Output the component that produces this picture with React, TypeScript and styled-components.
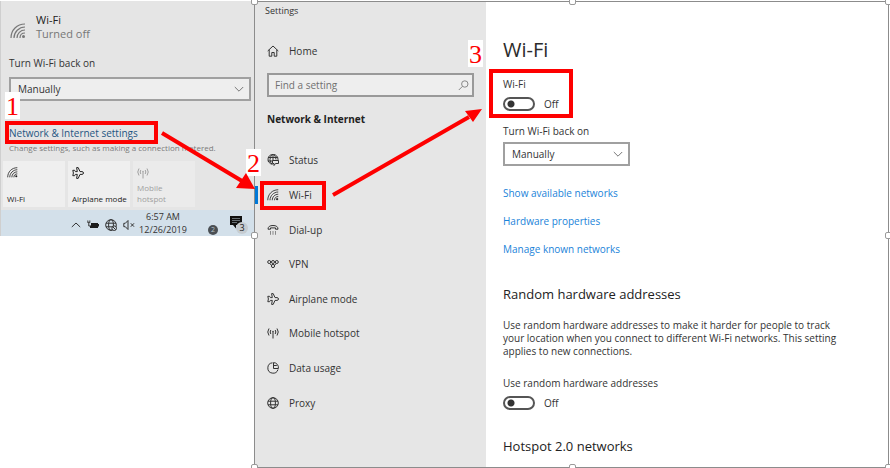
import React from "react";
import styled, { createGlobalStyle, css } from "styled-components";

const GlobalStyle = createGlobalStyle`
  * { box-sizing: border-box; }
  body {
    margin: 0;
    background: #fff;
    color: #333;
    font-family: "Open Sans", "Noto Sans", sans-serif;
    font-size: 10px;
    line-height: 14px;
  }
  button, input, select { font: inherit; color: inherit; }
  h1, h2, p { margin: 0; }
`;

/* ---------- shared parts ---------- */

const Page = styled.main`
  position: relative;
  display: flex;
  align-items: flex-start;
  min-height: 100vh;
  padding: 1px 1px 0 0;
  overflow: hidden;
`;

const SelectBox = styled.div<{ $muted?: boolean }>`
  position: relative;
  display: flex;
  align-items: center;
  height: 24px;
  svg {
    position: absolute;
    right: 7px;
    color: #777;
    pointer-events: none;
  }
  select {
    width: 100%;
    height: 100%;
    padding: 0 7px;
    appearance: none;
    border: 2px solid #a0a0a0;
    border-radius: 0;
    background: ${(p) => (p.$muted ? "#eeeeee" : "#fff")};
  }
`;

const Marked = styled.div<{ $top: number; $right: number; $bottom: number; $left: number }>`
  position: relative;
  width: fit-content;
  &::after {
    content: "";
    position: absolute;
    top: -${(p) => p.$top}px;
    right: -${(p) => p.$right}px;
    bottom: -${(p) => p.$bottom}px;
    left: -${(p) => p.$left}px;
    border: 4px solid #fe0000;
    pointer-events: none;
  }
`;

const StepNumber = styled.span<{ $x: number; $y: number }>`
  position: absolute;
  left: ${(p) => p.$x}px;
  top: ${(p) => p.$y}px;
  width: 15px;
  height: 27px;
  background: #fff;
  color: #fe0000;
  font-family: "Liberation Serif", serif;
  font-size: 26px;
  line-height: 30px;
  text-align: center;
`;

const Arrows = styled.svg`
  position: absolute;
  left: 0;
  top: 0;
  pointer-events: none;
`;

/* ---------- network flyout ---------- */

const Flyout = styled.section`
  flex: 0 0 254px;
  border-left: 1px solid #cfcfcf;
  background: #e5e5e5;
`;

const FlyoutBody = styled.div`
  padding: 12px 3px 3px 8px;
`;

const Connection = styled.div`
  display: flex;
  gap: 10px;
  padding-left: 1px;
  color: #777;
  font-size: 11px;
  svg { margin-top: 10px; }
  strong {
    display: block;
    color: #222;
    font-weight: 400;
  }
`;

const FlyoutLabel = styled.label`
  display: block;
  margin: 15px 0 7px;
`;

const FlyoutMark = styled.div`
  margin-top: 25px;
`;

const FlyoutLink = styled.a`
  display: block;
  color: #1f5582;
  text-decoration: none;
`;

const Caption = styled.p`
  margin-top: 2px;
  color: #7b7b7b;
  font-size: 8px;
  line-height: 12px;
  white-space: nowrap;
`;

const Tiles = styled.div`
  display: grid;
  grid-template-columns: repeat(3, 62px);
  gap: 3px;
  margin: 7px 0 0 -6px;
`;

const Tile = styled.button<{ $off?: boolean }>`
  display: flex;
  flex-direction: column;
  align-items: flex-start;
  justify-content: space-between;
  height: 46px;
  padding: 6px 0 3px 4px;
  border: 0;
  background: ${(p) => (p.$off ? "#ebebeb" : "#efefef")};
  color: ${(p) => (p.$off ? "#a0a0a0" : "#222")};
  font-size: 8px;
  line-height: 11px;
  text-align: left;
  white-space: nowrap;
`;

const Taskbar = styled.div`
  display: flex;
  align-items: center;
  height: 26px;
  padding: 0 6px 0 70px;
  background: #d3e0ea;
  color: #333;
`;

const Tray = styled.div`
  display: flex;
  align-items: center;
  gap: 6px;
  padding-top: 3px;
`;

const Clock = styled.time`
  width: 56px;
  font-size: 9px;
  line-height: 13px;
  text-align: center;
`;

const TrayEnd = styled.div`
  display: flex;
  align-items: center;
  gap: 12px;
  margin-left: auto;
`;

const Dot = styled.span`
  display: grid;
  place-items: center;
  width: 10px;
  height: 10px;
  margin-top: 13px;
  border-radius: 50%;
  background: #4a4f54;
  color: #b8c4cc;
  font-size: 7px;
  line-height: 10px;
`;

const Notice = styled.button`
  position: relative;
  display: flex;
  width: 18px;
  height: 22px;
  padding: 4px 0 0 0;
  border: 0;
  background: none;
`;

const Count = styled.span`
  position: absolute;
  right: 0;
  bottom: 0;
  width: 12px;
  height: 12px;
  border-radius: 50%;
  background: #c6ccd1;
  color: #222;
  font-size: 9px;
  line-height: 12px;
  text-align: center;
`;

/* ---------- settings window ---------- */

const Settings = styled.section`
  position: relative;
  display: flex;
  flex: 1;
  min-height: calc(100vh - 1px);
  border: 1px solid #8c8c8c;
`;

const Handle = styled.i<{ $h: "left" | "center" | "right"; $v: "top" | "middle" | "bottom" }>`
  position: absolute;
  width: 7px;
  height: 7px;
  border: 1px solid #9a9a9a;
  border-radius: 2px;
  background: #fff;
  ${(p) => p.$h === "left" && css`left: -4px;`}
  ${(p) => p.$h === "center" && css`left: calc(50% - 3px);`}
  ${(p) => p.$h === "right" && css`right: -4px;`}
  ${(p) => p.$v === "top" && css`top: -4px;`}
  ${(p) => p.$v === "middle" && css`top: calc(50% - 3px);`}
  ${(p) => p.$v === "bottom" && css`bottom: -4px;`}
`;

const Sidebar = styled.nav`
  flex: 0 0 231px;
  padding: 2px 12px 0 12px;
  background: #e6e6e6;
`;

const WindowTitle = styled.p`
  margin-left: -2px;
  font-size: 9px;
  line-height: 14px;
`;

const NavLink = styled.a`
  display: flex;
  align-items: center;
  gap: 10px;
  color: #333;
  text-decoration: none;
  svg { flex: none; }
`;

const Home = styled(NavLink)`
  margin-top: 26px;
`;

const Search = styled.div`
  position: relative;
  display: flex;
  align-items: center;
  height: 24px;
  margin-top: 15px;
  input {
    width: 100%;
    height: 100%;
    padding: 0 6px;
    border: 2px solid #999;
    border-radius: 0;
    background: #eeeeee;
  }
  input::placeholder { color: #707070; opacity: 1; }
  svg { position: absolute; right: 5px; }
`;

const Group = styled.h2`
  margin: 15px 0 17px;
  color: #222;
  font-size: 10px;
  font-weight: 700;
  line-height: 14px;
`;

const NavList = styled.ul`
  display: grid;
  grid-auto-rows: 1fr;
  align-items: center;
  min-height: 277px;
  margin: 0;
  padding: 0;
  list-style: none;
`;

const NavItem = styled.li<{ $current?: boolean }>`
  padding: 2px 0;
  ${(p) =>
    p.$current &&
    css`
      margin-left: -12px;
      padding-left: 9px;
      border-left: 3px solid #0078d7;
    `}
`;

const Content = styled.div`
  flex: 1;
  padding: 34px 17px 0;
`;

const Title = styled.h1`
  color: #2b2b2b;
  font-size: 20px;
  font-weight: 400;
  line-height: 28px;
`;

const Field = styled.div<{ $gap: number }>`
  margin-top: ${(p) => p.$gap}px;
  label { display: block; }
`;

const SwitchLine = styled.div`
  display: flex;
  align-items: center;
  gap: 9px;
  margin-top: 6px;
  input {
    width: 32px;
    height: 14px;
    margin: 0;
    appearance: none;
    border: 2px solid #555;
    border-radius: 8px;
    background: radial-gradient(circle at 6px 5px, #333 3px, transparent 4px);
  }
`;

const ContentSelect = styled(SelectBox)`
  width: 127px;
  margin-top: 4px;
`;

const Links = styled.div`
  display: grid;
  gap: 14px;
  justify-items: start;
  margin-top: 20px;
  a { color: #1a83d9; text-decoration: none; }
`;

const Heading = styled.h2<{ $gap: number }>`
  margin-top: ${(p) => p.$gap}px;
  color: #222;
  font-size: 13px;
  font-weight: 400;
  line-height: 20px;
`;

const Text = styled.p`
  max-width: 350px;
  margin-top: 15px;
  line-height: 13px;
`;

/* ---------- icons ---------- */

const line = { fill: "none", stroke: "currentColor", strokeWidth: 1 } as const;

const WifiIcon = ({ size = 12 }: { size?: number }) => (
  <svg width={size} height={size} viewBox="0 0 16 16" {...line} strokeWidth={1.2}>
    <path d="M1 15C1 7 7 1 15 1M4 15C4 9 9 4 15 4M7 15c0-4.500 3.500-8 8-8M10 15c0-3 2-5 5-5" />
    <circle cx="13.500" cy="13.500" r="1.500" fill="currentColor" stroke="none" />
  </svg>
);
const PlaneIcon = () => (
  <svg width="12" height="12" viewBox="0 0 12 12" {...line}>
    <path d="M4.600.6h1.600l1.800 4h2q1.500.2 1.500 1.400T10 7.400H8l-1.800 4H4.600l.7-4H3.400L2.600 8.700H.8L1.400 6 .8 3.300h1.800l.8 1.300h1.900z" />
  </svg>
);
const HotspotIcon = () => (
  <svg width="12" height="12" viewBox="0 0 12 12" {...line}>
    <path d="M2 1.500Q-.5 5 2 8.500M3.800 3q-1.300 2 0 4M10 1.500q2.500 3.500 0 7M8.200 3q1.300 2 0 4M6 5v6.500" />
    <circle cx="6" cy="4.500" r=".8" fill="currentColor" stroke="none" />
  </svg>
);
const ChevronIcon = ({ up }: { up?: boolean }) => (
  <svg width="10" height="10" viewBox="0 0 10 10" {...line}>
    <path d={up ? "M.8 7 5 3l4.200 4" : "M.8 3 5 7.200 9.200 3"} />
  </svg>
);
const BatteryIcon = () => (
  <svg width="12" height="10" viewBox="0 0 12 10">
    <path d="M4 3h7v1h1v2.500h-1V8H3V5.500h1z" fill="#1c1c1c" />
    <path d="M.8.500v1.300M2.800.500v1.300M.3 2.300h3M1.800 2.500v3.500h1.500" fill="none" stroke="#333" />
  </svg>
);
const GlobeIcon = ({ tray }: { tray?: boolean }) => (
  <svg width="12" height="12" viewBox="0 0 12 12" {...line}>
    <circle cx="6" cy="6" r="5.300" />
    <ellipse cx="6" cy="6" rx="2.400" ry="5.300" />
    <path d="M1 4.200h10M1 7.800h10" />
    {tray && (
      <>
        <circle cx="9.200" cy="9.200" r="2.300" fill="#d3e0ea" />
        <path d="m7.600 7.600 3.200 3.200" />
      </>
    )}
  </svg>
);
const MuteIcon = () => (
  <svg width="12" height="12" viewBox="0 0 12 12" {...line}>
    <path d="M.8 4.300h1.500L5 1.500v9L2.300 7.700H.8zM7.800 4.300l3.200 3.400M11 4.300 7.800 7.700" />
  </svg>
);
const MessageIcon = () => (
  <svg width="12" height="13" viewBox="0 0 12 13">
    <path d="M0 0h12v9H6v3.500L3 9H0z" fill="#111" />
    <path d="M2 2.500h8M2 4.500h8M2 6.500h5" stroke="#7c868d" strokeWidth=".8" />
  </svg>
);
const HomeIcon = () => (
  <svg width="12" height="12" viewBox="0 0 12 12" {...line}>
    <path d="M.7 6 6 1l5.300 5M2.200 4.800v6.400h2.600V7.500h2.400v3.700h2.600V4.800" />
  </svg>
);
const SearchIcon = () => (
  <svg width="11" height="11" viewBox="0 0 11 11" {...line} stroke="#888">
    <circle cx="6.800" cy="4" r="3.200" />
    <path d="M4.500 6.300.8 10" />
  </svg>
);
const StatusIcon = () => (
  <svg width="12" height="12" viewBox="0 0 12 12" {...line}>
    <path d="M5.500 10.300A5 5 0 1 1 11 5.500V7M6 .5v6M5.500.5Q3 2.500 3 5.500t2 4.700M6.500.5Q9 2.500 9 5.500M1.200 3.500h9.600M.8 7H6" />
    <path d="M5.500 6.500h6v3h-3L7 11.500v-2H5.500z" fill="#e6e6e6" />
  </svg>
);
const DialIcon = () => (
  <svg width="12" height="12" viewBox="0 0 12 12" {...line}>
    <path d="M1 5.200Q1 1.500 6 1.500t5 3.700H8.500V3.900h-5v1.300z" />
    <path d="M3.500 7v3.800M6 7v3.800M8.500 7v3.800" stroke="#888" />
  </svg>
);
const VpnIcon = () => (
  <svg width="12" height="12" viewBox="0 0 12 12" {...line}>
    <circle cx="2.200" cy="4" r="1.500" />
    <circle cx="6" cy="4" r="1.500" />
    <circle cx="9.800" cy="4" r="1.500" />
    <circle cx="6" cy="8" r="1.600" />
    <path d="m3 5.500 1.500 2M9 5.500l-1.500 2" />
  </svg>
);
const DataIcon = () => (
  <svg width="12" height="12" viewBox="0 0 12 12" {...line}>
    <path d="M5.500.8A5.200 5.200 0 1 0 11 7.500M6.500.6a5 5 0 0 1 4.900 5.900H6.500zM6.500 3.500h3.300" />
  </svg>
);

/* ---------- page ---------- */

const NAV = [
  { label: "Status", icon: <StatusIcon /> },
  { label: "Wi-Fi", icon: <WifiIcon />, current: true },
  { label: "Dial-up", icon: <DialIcon /> },
  { label: "VPN", icon: <VpnIcon /> },
  { label: "Airplane mode", icon: <PlaneIcon /> },
  { label: "Mobile hotspot", icon: <HotspotIcon /> },
  { label: "Data usage", icon: <DataIcon /> },
  { label: "Proxy", icon: <GlobeIcon /> },
];

const HANDLES = [
  ["left", "top"], ["center", "top"], ["right", "top"],
  ["left", "middle"], ["right", "middle"],
  ["left", "bottom"], ["center", "bottom"], ["right", "bottom"],
] as const;

export default function App() {
  return (
    <Page>
      <GlobalStyle />
      <Flyout>
        <FlyoutBody>
          <Connection>
            <WifiIcon size={16} />
            <div><strong>Wi-Fi</strong>Turned off</div>
          </Connection>
          <FlyoutLabel htmlFor="flyout-back-on">Turn Wi-Fi back on</FlyoutLabel>
          <SelectBox $muted>
            <select id="flyout-back-on"><option>Manually</option></select>
            <ChevronIcon />
          </SelectBox>
          <FlyoutMark>
            <Marked $top={5} $right={20} $bottom={4} $left={4}>
              <FlyoutLink href="#network">Network &amp; Internet settings</FlyoutLink>
            </Marked>
          </FlyoutMark>
          <Caption>Change settings, such as making a connection metered.</Caption>
          <Tiles>
            <Tile><WifiIcon size={11} />Wi-Fi</Tile>
            <Tile><PlaneIcon />Airplane mode</Tile>
            <Tile $off><HotspotIcon /><span>Mobile<br />hotspot</span></Tile>
          </Tiles>
        </FlyoutBody>
        <Taskbar>
          <Tray><ChevronIcon up /><BatteryIcon /><GlobeIcon tray /><MuteIcon /></Tray>
          <Clock>6:57 AM<br />12/26/2019</Clock>
          <TrayEnd>
            <Dot>2</Dot>
            <Notice aria-label="Notifications"><MessageIcon /><Count>3</Count></Notice>
          </TrayEnd>
        </Taskbar>
      </Flyout>

      <Settings>
        <Sidebar>
          <WindowTitle>Settings</WindowTitle>
          <Home href="#home"><HomeIcon />Home</Home>
          <Search>
            <input type="search" placeholder="Find a setting" aria-label="Find a setting" />
            <SearchIcon />
          </Search>
          <Group>Network &amp; Internet</Group>
          <NavList>
            {NAV.map(({ label, icon, current }) => {
              const link = <NavLink href="#section">{icon}{label}</NavLink>;
              return (
                <NavItem key={label} $current={current}>
                  {current ? <Marked $top={7} $right={14} $bottom={8} $left={7}>{link}</Marked> : link}
                </NavItem>
              );
            })}
          </NavList>
        </Sidebar>
        <Content>
          <Title>Wi-Fi</Title>
          <Field $gap={13}>
            <Marked $top={8} $right={14} $bottom={7} $left={14}>
              <label htmlFor="wifi">Wi-Fi</label>
              <SwitchLine><input id="wifi" type="checkbox" role="switch" />Off</SwitchLine>
            </Marked>
          </Field>
          <Field $gap={13}>
            <label htmlFor="back-on">Turn Wi-Fi back on</label>
            <ContentSelect>
              <select id="back-on"><option>Manually</option></select>
              <ChevronIcon />
            </ContentSelect>
          </Field>
          <Links>
            <a href="#available">Show available networks</a>
            <a href="#hardware">Hardware properties</a>
            <a href="#known">Manage known networks</a>
          </Links>
          <Heading $gap={28}>Random hardware addresses</Heading>
          <Text>
            Use random hardware addresses to make it harder for people to track
            your location when you connect to different Wi-Fi networks. This
            setting applies to new connections.
          </Text>
          <Field $gap={18}>
            <label htmlFor="random">Use random hardware addresses</label>
            <SwitchLine><input id="random" type="checkbox" role="switch" />Off</SwitchLine>
          </Field>
          <Heading $gap={26}>Hotspot 2.0 networks</Heading>
        </Content>
        {HANDLES.map(([h, v]) => <Handle key={h + v} $h={h} $v={v} />)}
      </Settings>

      <StepNumber $x={5} $y={92}>1</StepNumber>
      <StepNumber $x={246} $y={149}>2</StepNumber>
      <StepNumber $x={468} $y={40}>3</StepNumber>
      <Arrows width="490" height="220" viewBox="0 0 490 220" fill="#fe0000" stroke="#fe0000">
        <path d="M162 133 242 181M333 195 469 117" strokeWidth="4" />
        <path d="M255 189 236 188 246 173zM482 109 465 111 473 122z" stroke="none" />
      </Arrows>
    </Page>
  );
}
